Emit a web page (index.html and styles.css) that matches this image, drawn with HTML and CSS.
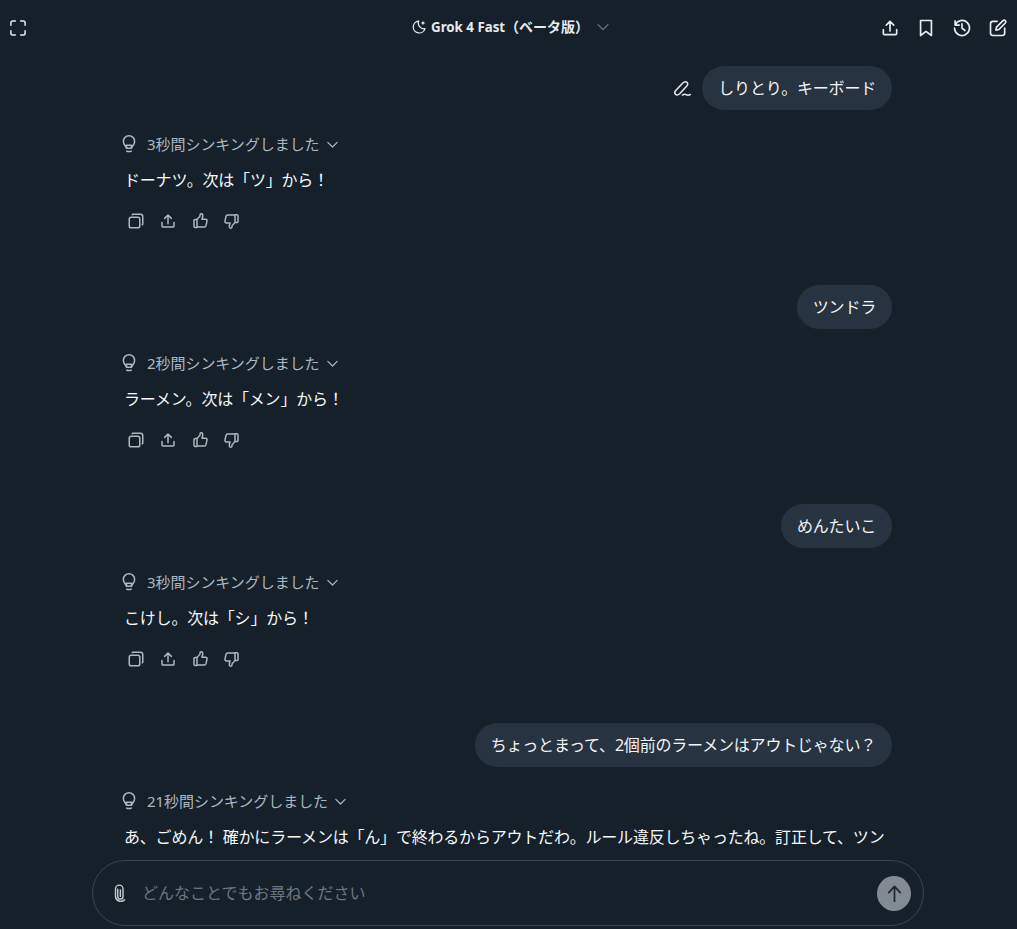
FILE: index.html
```html
<!DOCTYPE html>
<html lang="ja">
<head>
<meta charset="utf-8">
<title>Grok</title>
<link rel="stylesheet" href="styles.css">
</head>
<body>
<svg class="defs" width="0" height="0" aria-hidden="true">
  <symbol id="i-share" viewBox="0 0 24 24"><path d="M12 15.500V4M7.500 8.500 12 4l4.500 4.500M4 14v4.500A1.500 1.500 0 0 0 5.500 20h13a1.500 1.500 0 0 0 1.500-1.500V14" fill="none" stroke="currentColor" stroke-width="2" stroke-linecap="round" stroke-linejoin="round"/></symbol>
  <symbol id="i-bulb" viewBox="0 0 24 24"><path d="M8.500 17.500c0-2.500-4-4-4-9a7.500 7.500 0 0 1 15 0c0 5-4 6.500-4 9zM9 17.500 8.500 13.500h7l-.5 4M9 21.500c1 .8 5 .8 6 0" fill="none" stroke="currentColor" stroke-width="2" stroke-linecap="round" stroke-linejoin="round"/></symbol>
  <symbol id="i-chev" viewBox="0 0 24 24"><path d="m4.500 8.500 7.500 7.500 7.500-7.500" fill="none" stroke="currentColor" stroke-width="1.900" stroke-linecap="round" stroke-linejoin="round"/></symbol>
  <symbol id="i-copy" viewBox="0 0 24 24"><rect x="3" y="7" width="14" height="14" rx="2.500" fill="none" stroke="currentColor" stroke-width="2"/><path d="M7 3.800c0-.5.300-.8.800-.8H18c1.700 0 3 1.300 3 3v10.200c0 .5-.3.800-.8.800" fill="none" stroke="currentColor" stroke-width="2" stroke-linecap="round"/></symbol>
  <symbol id="i-up" viewBox="0 0 24 24"><path d="M8 20.500H5.500A1.500 1.500 0 0 1 4 19v-7.500a1.500 1.500 0 0 1 1.500-1.500H8zM8 10l4-4.500V4a1.800 1.800 0 0 1 3.500-.5c.6 2 0 4-1 6h5c1.300 0 2.200 1.200 1.900 2.400l-1.500 6.600a2 2 0 0 1-2 1.500H8" fill="none" stroke="currentColor" stroke-width="2" stroke-linecap="round" stroke-linejoin="round"/></symbol>
  <symbol id="i-down" viewBox="0 0 24 24"><path d="M16 3.500h2.500A1.500 1.500 0 0 1 20 5v7.500a1.500 1.500 0 0 1-1.500 1.500H16zM16 14l-4 4.500V20a1.800 1.800 0 0 1-3.500.5c-.6-2 0-4 1-6h-5c-1.300 0-2.200-1.200-1.900-2.400l1.500-6.600a2 2 0 0 1 2-1.500H16" fill="none" stroke="currentColor" stroke-width="2" stroke-linecap="round" stroke-linejoin="round"/></symbol>
</svg>
<div class="app">
  <header class="topbar">
    <button class="iconbtn" aria-label="全画面">
      <svg class="ic18" viewBox="0 0 18 18"><path d="M1 6V3a2 2 0 0 1 2-2h3M12 1h3a2 2 0 0 1 2 2v3M17 12v3a2 2 0 0 1-2 2h-3M6 17H3a2 2 0 0 1-2-2v-3" fill="none" stroke="currentColor" stroke-width="1.700" stroke-linecap="round"/></svg>
    </button>
    <div class="model">
      <svg class="moon" viewBox="0 0 24 24"><path d="M11.500 3a9 9 0 1 0 9.500 11.500A8.500 8.500 0 0 1 11.500 3z" fill="none" stroke="currentColor" stroke-width="1.900" stroke-linejoin="round"/><path d="M18 2.500l1 2.500 2.500 1-2.500 1-1 2.500-1-2.500-2.500-1 2.500-1z" fill="currentColor"/></svg>
      <span class="model-name">Grok 4 Fast<span class="model-tag">（ベータ版）</span></span>
      <svg class="model-chev"><use href="#i-chev"/></svg>
    </div>
    <div class="top-actions">
      <svg class="ic20"><use href="#i-share"/></svg>
      <svg class="ic20" viewBox="0 0 24 24"><path d="M5.500 3h13v18L12 16l-6.500 5z" fill="none" stroke="currentColor" stroke-width="2" stroke-linejoin="round"/></svg>
      <svg class="ic20" viewBox="0 0 24 24"><path d="M3.700 3.500v5h5M3.700 8.500A9 9 0 1 1 3 12M12 7v5l3.500 3" fill="none" stroke="currentColor" stroke-width="2" stroke-linecap="round" stroke-linejoin="round"/></svg>
      <svg class="ic20" viewBox="0 0 24 24"><path d="M11 4H6a3 3 0 0 0-3 3v11a3 3 0 0 0 3 3h11a3 3 0 0 0 3-3v-6M9.500 14.500l.7-3.500L18 3.200a1.900 1.900 0 0 1 2.800 2.800L13 13.800z" fill="none" stroke="currentColor" stroke-width="2" stroke-linecap="round" stroke-linejoin="round"/></svg>
    </div>
  </header>

  <main class="chat">
    <div class="turn">
      <div class="user-row">
        <svg class="edit" viewBox="0 0 24 24"><path d="M4 19.500c-1.500-1.500-.5-3.500 1-5l8-8.500c1.500-1.500 3.500-2 5-.8s1 3.300-.5 4.800L9.500 18.500c-1.500 1.500-4 2.300-5.500 1zM12.500 20.500c2-1.200 3-1.500 4.500-.5s3 .8 5-.2" fill="none" stroke="currentColor" stroke-width="1.800" stroke-linecap="round" stroke-linejoin="round"/></svg>
        <div class="bubble">しりとり。キーボード</div>
      </div>
      <div class="thinking"><svg class="bulb"><use href="#i-bulb"/></svg><span>3秒間シンキングしました</span><svg class="chev"><use href="#i-chev"/></svg></div>
      <p class="reply">ドーナツ。次は「ツ」から！</p>
      <div class="actions"><svg><use href="#i-copy"/></svg><svg><use href="#i-share"/></svg><svg><use href="#i-up"/></svg><svg><use href="#i-down"/></svg></div>
    </div>
    <div class="turn">
      <div class="user-row"><div class="bubble">ツンドラ</div></div>
      <div class="thinking"><svg class="bulb"><use href="#i-bulb"/></svg><span>2秒間シンキングしました</span><svg class="chev"><use href="#i-chev"/></svg></div>
      <p class="reply">ラーメン。次は「メン」から！</p>
      <div class="actions"><svg><use href="#i-copy"/></svg><svg><use href="#i-share"/></svg><svg><use href="#i-up"/></svg><svg><use href="#i-down"/></svg></div>
    </div>
    <div class="turn">
      <div class="user-row"><div class="bubble">めんたいこ</div></div>
      <div class="thinking"><svg class="bulb"><use href="#i-bulb"/></svg><span>3秒間シンキングしました</span><svg class="chev"><use href="#i-chev"/></svg></div>
      <p class="reply">こけし。次は「シ」から！</p>
      <div class="actions"><svg><use href="#i-copy"/></svg><svg><use href="#i-share"/></svg><svg><use href="#i-up"/></svg><svg><use href="#i-down"/></svg></div>
    </div>
    <div class="turn">
      <div class="user-row"><div class="bubble">ちょっとまって、2個前のラーメンはアウトじゃない？</div></div>
      <div class="thinking"><svg class="bulb"><use href="#i-bulb"/></svg><span>21秒間シンキングしました</span><svg class="chev"><use href="#i-chev"/></svg></div>
      <p class="reply">あ、ごめん！ 確かにラーメンは「ん」で終わるからアウトだわ。ルール違反しちゃったね。訂正して、ツン</p>
    </div>
  </main>

  <footer class="composer-wrap">
    <div class="composer">
      <svg class="clip" viewBox="0 0 24 24"><path d="M9 7v9.500a3.500 3.500 0 0 0 7 0V6.500a5 5 0 0 0-10 0v10a7 7 0 0 0 12 4.500M12.500 8v8.500" fill="none" stroke="currentColor" stroke-width="1.900" stroke-linecap="round"/></svg>
      <span class="placeholder">どんなことでもお尋ねください</span>
      <button class="send" aria-label="送信">
        <svg viewBox="0 0 24 24"><path d="M12 20V5M6 11l6-6.500 6 6.500" fill="none" stroke="currentColor" stroke-width="1.800" stroke-linecap="round" stroke-linejoin="round"/></svg>
      </button>
    </div>
  </footer>
</div>
</body>
</html>
```
FILE: styles.css
```css
* { box-sizing: border-box; }
html, body { margin: 0; height: 100%; }
body {
  background: #15202b;
  color: #f3f5f7;
  font-family: "Noto Sans", "Noto Sans CJK JP", sans-serif;
  font-size: 16px;
  overflow: hidden;
}
.defs { position: absolute; }
.app { height: 929px; display: flex; flex-direction: column; }

.topbar {
  height: 56px;
  flex: none;
  display: flex;
  align-items: center;
  justify-content: space-between;
  padding: 0 9px 0 10px;
  position: relative;
}
.iconbtn { background: none; border: 0; padding: 0; color: #e7ebef; display: flex; }
.ic18 { width: 16px; height: 16px; }
.model {
  position: absolute;
  left: 411px;
  top: 16px;
  display: flex;
  align-items: center;
  height: 21px;
  color: #e7ebef;
}
.moon { width: 16px; height: 16px; margin-right: 4px; }
.model-name { font-size: 13.3px; font-weight: 700; line-height: 21px; white-space: nowrap; }
.model-tag { font-size: 14px; }
.model-chev { width: 16px; height: 16px; margin-left: 6px; color: #6b7680; }
.top-actions { display: flex; gap: 16px; color: #e7ebef; }
.ic20 { width: 20px; height: 20px; display: block; }

.chat {
  flex: 1;
  min-height: 0;
  overflow: hidden;
  padding: 10px 125px 0 124px;
}
.turn { height: 219px; display: flex; flex-direction: column; }
.user-row { display: flex; justify-content: flex-end; align-items: center; gap: 10px; height: 44px; flex: none; }
.edit { width: 20px; height: 20px; color: #e7ebef; }
.bubble {
  background: #273340;
  border-radius: 22px;
  height: 44px;
  line-height: 44px;
  padding: 0 16px;
  white-space: nowrap;
  font-size: 16px;
  letter-spacing: -0.2px;
  color: #f3f5f7;
}
.thinking {
  margin-top: 24px;
  height: 20px;
  display: flex;
  align-items: center;
  color: #adb7c0;
  font-size: 15px;
  letter-spacing: -0.05px;
  line-height: 20px;
}
.bulb { width: 18px; height: 18px; margin-left: -4px; margin-right: 9px; }
.chev { width: 15px; height: 15px; margin-left: 5px; }
.reply {
  margin: 14px 0 0;
  font-size: 16px;
  letter-spacing: -0.2px;
  line-height: 24px;
  white-space: nowrap;
  color: #f7f8f9;
}
.actions { display: flex; gap: 14px; margin-top: 20px; color: #adb7c0; padding-left: 3px; }
.actions svg { width: 18px; height: 18px; display: block; }

.composer-wrap { flex: none; height: 73px; padding: 4px 93px 0 92px; background: #15202b; }
.composer {
  height: 66px;
  border: 1px solid #39444f;
  border-radius: 33px;
  display: flex;
  align-items: center;
  padding: 0 12px 0 18px;
}
.clip { width: 18px; height: 18px; color: #c3cad1; flex: none; }
.placeholder { margin-left: 13px; margin-top: -2px; flex: 1; color: #6d7780; font-size: 16px; white-space: nowrap; }
.send {
  width: 34px;
  height: 35px;
  border: 0;
  padding: 0;
  border-radius: 50%;
  background: #828b94;
  color: #1d2833;
  display: flex;
  align-items: center;
  justify-content: center;
}
.send svg { width: 23px; height: 23px; }
```
